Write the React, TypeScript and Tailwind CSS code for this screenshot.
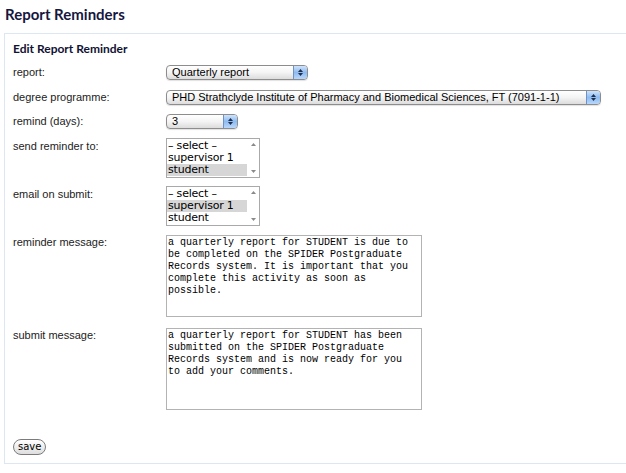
import React from "react";

const LABEL = "w-[153px] shrink-0 text-[11px] text-[#222] font-['Liberation_Sans',Arial,sans-serif]";

const SelectBox: React.FC<{ value: string; width: string }> = ({ value, width }) => (
  <div
    className={`${width} h-[15px] flex items-stretch rounded-[4px] border border-[#8d8d8d] overflow-hidden
                bg-gradient-to-b from-white via-[#f4f4f4] to-[#dcdcdc] shadow-[0_1px_1px_rgba(0,0,0,0.12)]`}
  >
    <span className="flex-1 pl-[5px] text-[11px] leading-[13px] text-black font-['Liberation_Sans',Arial,sans-serif] whitespace-nowrap overflow-hidden">
      {value}
    </span>
    <span className="w-[14px] flex flex-col items-center justify-center gap-[1px] border-l border-[#6f92c4] bg-gradient-to-b from-[#cfe3fb] via-[#8ebbf0] to-[#b9d7fb]">
      <svg width="5" height="3" viewBox="0 0 5 3"><path d="M0 3 L2.5 0 L5 3 Z" fill="#1f2f4f" /></svg>
      <svg width="5" height="3" viewBox="0 0 5 3"><path d="M0 0 L2.5 3 L5 0 Z" fill="#1f2f4f" /></svg>
    </span>
  </div>
);

const ListBox: React.FC<{ items: string[]; selected: number }> = ({ items, selected }) => (
  <div className="w-[94px] h-[40px] border border-[#a9a9a9] bg-white flex">
    <div className="flex-1 pt-[1px]">
      {items.map((it, i) => (
        <div
          key={it}
          className={`h-[12px] pl-[1px] text-[11px] leading-[12px] text-black font-['DejaVu_Sans',Verdana,sans-serif] tracking-[-0.2px] overflow-hidden
                      ${i === selected ? "bg-[#d6d6d6]" : ""}`}
        >
          {it}
        </div>
      ))}
    </div>
    <div className="w-[12px] flex flex-col justify-between items-center py-[4px]">
      <svg width="5" height="3" viewBox="0 0 5 3"><path d="M0 3 L2.5 0 L5 3 Z" fill="#8a8a8a" /></svg>
      <svg width="5" height="3" viewBox="0 0 5 3"><path d="M0 0 L2.5 3 L5 0 Z" fill="#8a8a8a" /></svg>
    </div>
  </div>
);

const TextBox: React.FC<{ text: string }> = ({ text }) => (
  <div className="w-[256px] h-[82px] border border-[#b3b3b3] bg-white pl-[1px] pt-[1px]">
    <p className="text-[10px] leading-[12px] text-black font-['Liberation_Mono','Courier_New',monospace] whitespace-pre-wrap">
      {text}
    </p>
  </div>
);

export default function App() {
  return (
    <div className="w-[626px] h-[473px] bg-white overflow-hidden">
      <h1 className="pl-[5px] pt-[5px] h-[33px] text-[15px] leading-[18px] font-bold text-[#16163f] font-['Lato','DejaVu_Sans',sans-serif]">
        Report Reminders
      </h1>

      <div className="ml-[4px] w-[700px] h-[431px] border-y border-l border-[#dde7f4] pl-[8px]">
        <h2 className="pt-[8px] text-[12px] leading-[14px] font-bold text-[#111133] font-['Lato','DejaVu_Sans',sans-serif]">
          Edit Report Reminder
        </h2>

        <div className="mt-[9px] flex items-start">
          <span className={`${LABEL} leading-[15px]`}>report:</span>
          <SelectBox value="Quarterly report" width="w-[142px]" />
        </div>

        <div className="mt-[10px] flex items-start">
          <span className={`${LABEL} leading-[15px]`}>degree programme:</span>
          <SelectBox value="PHD Strathclyde Institute of Pharmacy and Biomedical Sciences, FT (7091-1-1)" width="w-[435px]" />
        </div>

        <div className="mt-[9px] flex items-start">
          <span className={`${LABEL} leading-[15px]`}>remind (days):</span>
          <SelectBox value="3" width="w-[72px]" />
        </div>

        <div className="mt-[9px] flex items-start">
          <span className={`${LABEL} leading-[16px]`}>send reminder to:</span>
          <ListBox items={["– select –", "supervisor 1", "student"]} selected={2} />
        </div>

        <div className="mt-[8px] flex items-start">
          <span className={`${LABEL} leading-[16px]`}>email on submit:</span>
          <ListBox items={["– select –", "supervisor 1", "student"]} selected={1} />
        </div>

        <div className="mt-[9px] flex items-start">
          <span className={`${LABEL} leading-[14px]`}>reminder message:</span>
          <TextBox text={"a quarterly report for STUDENT is due to\nbe completed on the SPIDER Postgraduate\nRecords system. It is important that you\ncomplete this activity as soon as\npossible."} />
        </div>

        <div className="mt-[11px] flex items-start">
          <span className={`${LABEL} leading-[14px]`}>submit message:</span>
          <TextBox text={"a quarterly report for STUDENT has been\nsubmitted on the SPIDER Postgraduate\nRecords system and is now ready for you\nto add your comments."} />
        </div>

        <button className="mt-[29px] h-[16px] px-[4px] rounded-full border border-[#7b7b7b] bg-gradient-to-b from-white to-[#dedede] text-[10px] leading-[14px] text-black font-['DejaVu_Sans',Verdana,sans-serif]">
          save
        </button>
      </div>
    </div>
  );
}
